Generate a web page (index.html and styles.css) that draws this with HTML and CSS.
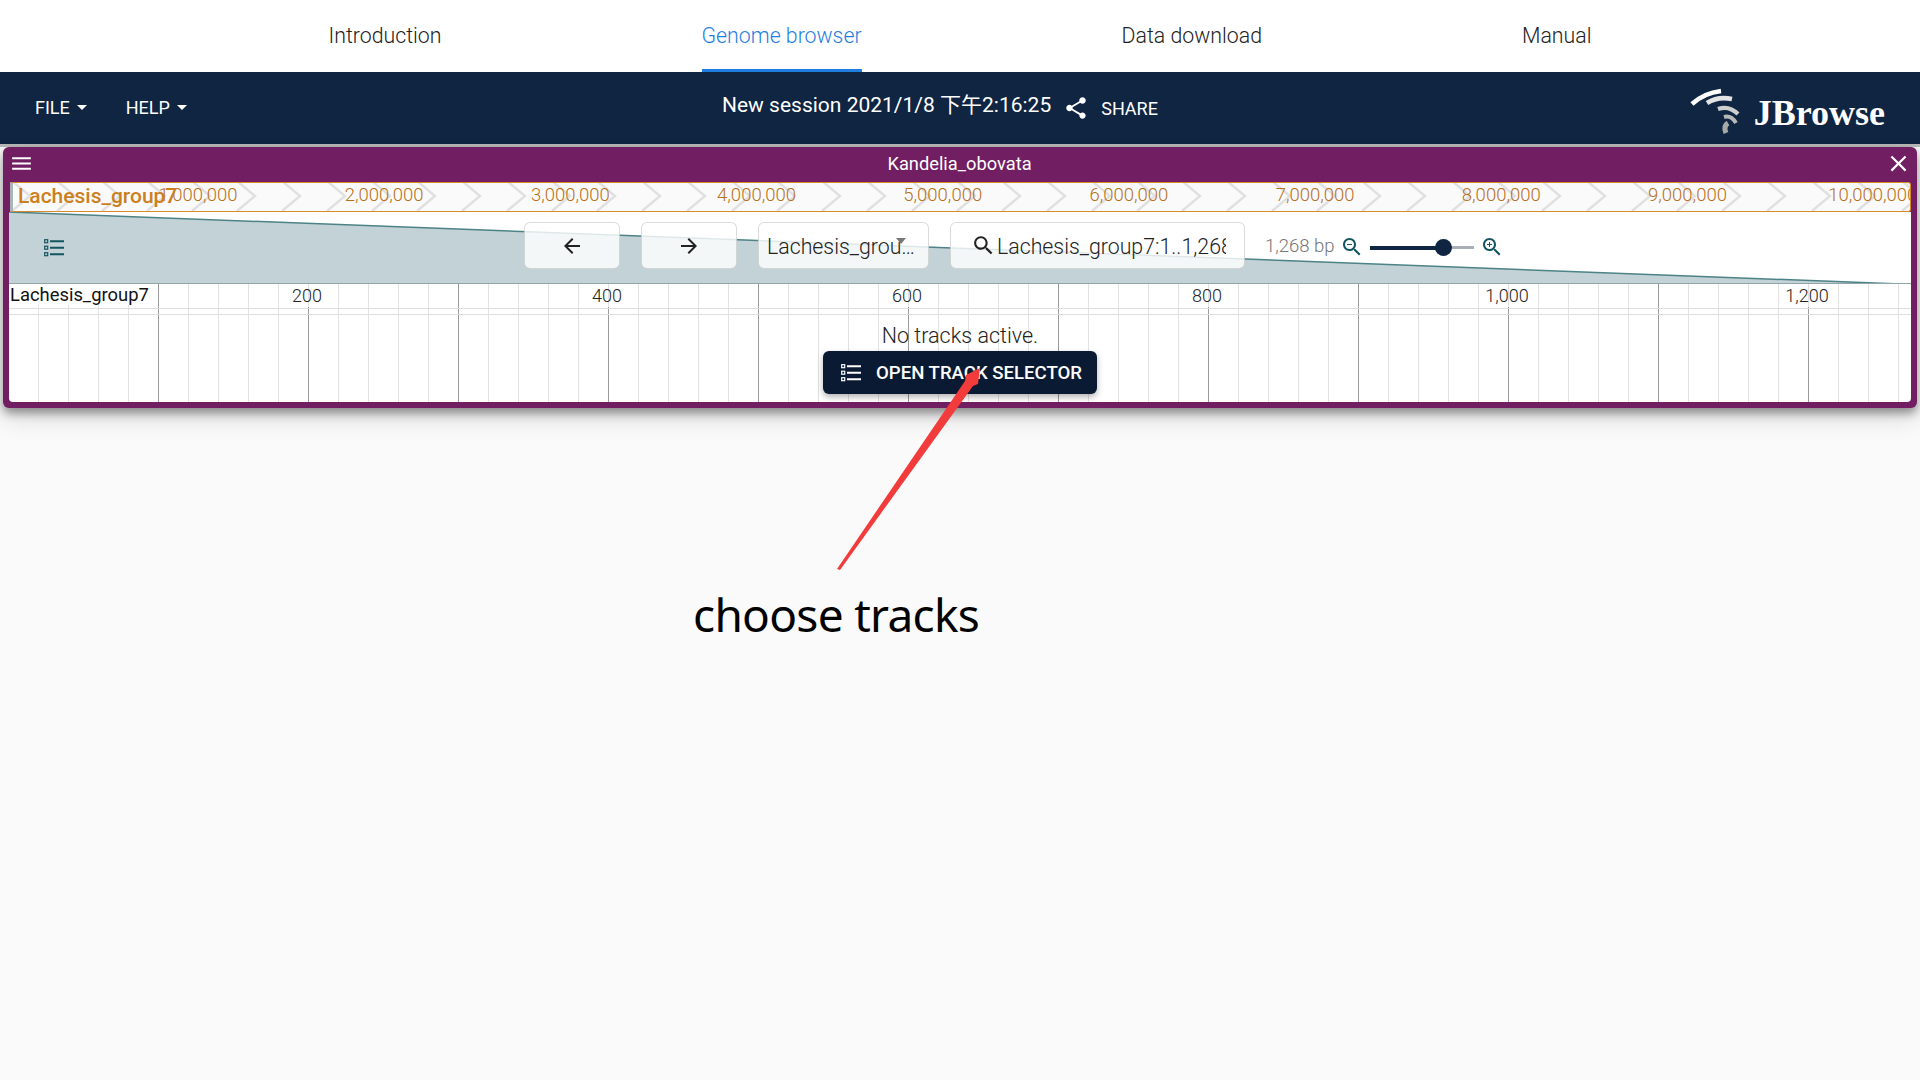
FILE: index.html
```html
<!DOCTYPE html>
<html lang="en">
<head>
    <meta charset="UTF-8">
    <title>Genome browser</title>
    <link rel="stylesheet" href="styles.css">
</head>
<body>
<nav class="topnav">
    <a class="topnav-item">Introduction</a>
    <a class="topnav-item active">Genome browser</a>
    <a class="topnav-item">Data download</a>
    <a class="topnav-item">Manual</a>
</nav>

<header class="appbar">
    <div class="menus">
        <span class="menu-btn">FILE<i class="caret"></i></span>
        <span class="menu-btn">HELP<i class="caret"></i></span>
    </div>
    <div class="session">
        <span class="session-name">New session 2021/1/8 下午2:16:25</span>
        <svg class="share-icon" viewBox="0 0 24 24"><path d="M18 16.08c-.76 0-1.44.3-1.96.77L8.91 12.7c.05-.23.09-.46.09-.7s-.04-.47-.09-.7l7.05-4.11c.54.5 1.25.81 2.04.81 1.66 0 3-1.34 3-3s-1.34-3-3-3-3 1.34-3 3c0 .24.04.47.09.7L8.04 9.81C7.5 9.31 6.79 9 6 9c-1.66 0-3 1.34-3 3s1.34 3 3 3c.79 0 1.5-.31 2.04-.81l7.12 4.16c-.05.21-.08.43-.08.65 0 1.61 1.31 2.92 2.92 2.92 1.61 0 2.92-1.31 2.92-2.92s-1.31-2.92-2.92-2.92z"/></svg>
        <span class="share-text">SHARE</span>
    </div>
    <div class="logo">
        <svg class="logo-mark" viewBox="0 0 68 52" fill="none">
            <path d="M6 20 Q18 9 35 7" stroke="#fff" stroke-width="4.6"/>
            <path d="M21 19 Q32 12 46 15" stroke="#e3e3e3" stroke-width="4.6"/>
            <path d="M32 25 Q43 21 52 30" stroke="#cfcfcf" stroke-width="4.2"/>
            <path d="M38 33 Q45 31 50 39" stroke="#b8b8b8" stroke-width="4"/>
            <path d="M40 49 Q37 42 42 39" stroke="#a8a8a8" stroke-width="5"/>
        </svg>
        <span class="logo-text">JBrowse</span>
    </div>
</header>

<section class="view">
    <div class="view-title">
        <svg class="menu-icon" viewBox="0 0 24 24"><path d="M3 18h18v-2H3v2zm0-5h18v-2H3v2zm0-7v2h18V6H3z"/></svg>
        <span class="title-text">Kandelia_obovata</span>
        <svg class="close-icon" viewBox="0 0 24 24"><path d="M19 6.41L17.59 5 12 10.59 6.41 5 5 6.41 10.59 12 5 17.59 6.41 19 12 13.41 17.59 19 19 17.59 13.41 12z"/></svg>
    </div>

    <div class="overview">
        <svg class="chevrons">
            <defs>
                <pattern id="chev" patternUnits="userSpaceOnUse" width="45" height="30">
                    <path d="M2 -1 L20 14 L2 29" fill="none" stroke="#e0e0e0" stroke-width="2.4"/>
                </pattern>
            </defs>
            <rect width="100%" height="100%" fill="url(#chev)"/>
        </svg>
        <div class="ov-ticks">
            <span>1,000,000</span>
            <span>2,000,000</span>
            <span>3,000,000</span>
            <span>4,000,000</span>
            <span>5,000,000</span>
            <span>6,000,000</span>
            <span>7,000,000</span>
            <span>8,000,000</span>
            <span>9,000,000</span>
            <span class="ov-tick-long">10,000,000</span>
        </div>
        <span class="ov-name">Lachesis_group7</span>
    </div>

    <div class="toolbar">
        <svg class="zoom-poly" viewBox="0 0 1902 72" preserveAspectRatio="none">
            <polygon points="0,0 1892,72 0,72" fill="#c3d2d6"/>
            <line x1="0" y1="0" x2="1892" y2="72" stroke="#4d8286" stroke-width="1.5"/>
            <line x1="0" y1="71.5" x2="1902" y2="71.5" stroke="#8fa5a8" stroke-width="1"/>
        </svg>
        <svg class="tracks-icon" viewBox="0 0 20 20">
            <rect x="0.7" y="1.7" width="3" height="3" fill="none" stroke="#135560" stroke-width="1.2"/>
            <rect x="0.7" y="8.2" width="3" height="3" fill="none" stroke="#135560" stroke-width="1.2"/>
            <rect x="0.7" y="14.7" width="3" height="3" fill="none" stroke="#135560" stroke-width="1.2"/>
            <path d="M6 3.2h14M6 9.7h14M6 16.2h14" stroke="#135560" stroke-width="2"/>
        </svg>
        <div class="controls">
            <span class="box arrow-btn"><svg viewBox="0 0 24 24"><path d="M20 11H7.83l5.59-5.59L12 4l-8 8 8 8 1.41-1.41L7.83 13H20v-2z"/></svg></span>
            <span class="box arrow-btn"><svg viewBox="0 0 24 24"><path d="M12 4l-1.41 1.41L16.17 11H4v2h12.17l-5.58 5.59L12 20l8-8z"/></svg></span>
            <span class="box select-box">Lachesis_grou…<i class="select-caret"></i></span>
            <span class="box search-box">
                <svg viewBox="0 0 24 24"><path d="M15.5 14h-.79l-.28-.27C15.41 12.59 16 11.11 16 9.5 16 5.91 13.09 3 9.5 3S3 5.91 3 9.5 5.91 16 9.5 16c1.61 0 3.09-.59 4.23-1.57l.27.28v.79l5 4.99L20.49 19l-4.99-5zm-6 0C7.01 14 5 11.99 5 9.5S7.01 5 9.5 5 14 7.01 14 9.5 11.99 14 9.5 14z"/></svg>
                <span class="search-text">Lachesis_group7:1..1,268</span>
            </span>
            <span class="bp-label">1,268 bp</span>
            <svg class="zoom-icon" viewBox="0 0 24 24"><path d="M15.5 14h-.79l-.28-.27C15.41 12.59 16 11.11 16 9.5 16 5.91 13.09 3 9.5 3S3 5.91 3 9.5 5.91 16 9.5 16c1.61 0 3.09-.59 4.23-1.57l.27.28v.79l5 4.99L20.49 19l-4.99-5zm-6 0C7.01 14 5 11.99 5 9.5S7.01 5 9.5 5 14 7.01 14 9.5 11.99 14 9.5 14zM7 9h5v1H7z"/></svg>
            <div class="slider"><i class="slider-fill"></i><i class="slider-thumb"></i></div>
            <svg class="zoom-icon" viewBox="0 0 24 24"><path d="M15.5 14h-.79l-.28-.27C15.41 12.59 16 11.11 16 9.5 16 5.91 13.09 3 9.5 3S3 5.91 3 9.5 5.91 16 9.5 16c1.61 0 3.09-.59 4.23-1.57l.27.28v.79l5 4.99L20.49 19l-4.99-5zm-6 0C7.01 14 5 11.99 5 9.5S7.01 5 9.5 5 14 7.01 14 9.5 11.99 14 9.5 14zM12 10h-2v2H9v-2H7V9h2V7h1v2h2v1z"/></svg>
        </div>
    </div>

    <div class="ruler">
        <span class="ruler-name">Lachesis_group7</span>
        <div class="ruler-ticks">
            <span>200</span>
            <span>400</span>
            <span>600</span>
            <span>800</span>
            <span>1,000</span>
            <span>1,200</span>
        </div>
        <p class="no-tracks">No tracks active.</p>
        <button class="open-tracks">
            <svg viewBox="0 0 20 20">
                <rect x="0.7" y="1.7" width="3" height="3" fill="none" stroke="#fff" stroke-width="1.2"/>
                <rect x="0.7" y="8.2" width="3" height="3" fill="none" stroke="#fff" stroke-width="1.2"/>
                <rect x="0.7" y="14.7" width="3" height="3" fill="none" stroke="#fff" stroke-width="1.2"/>
                <path d="M6 3.2h14M6 9.7h14M6 16.2h14" stroke="#fff" stroke-width="2"/>
            </svg>
            OPEN TRACK SELECTOR
        </button>
    </div>
</section>

<!-- annotation drawn on top of the screenshot -->
<svg class="note-arrow" viewBox="0 0 1920 1080">
    <polygon points="837,569 965,381 966,375 980,368 978,384 973,386 840,570" fill="#f23b3b"/>
</svg>
<div class="note-text">choose tracks</div>
</body>
</html>
```

FILE: styles.css
```css
* {
    padding: 0;
    margin: 0;
    box-sizing: border-box;
}

body {
    background: #fafafa;
    font-family: Roboto, "Noto Sans CJK SC", sans-serif;
    height: 1080px;
    overflow: hidden;
    position: relative;
}

.topnav {
    height: 72px;
    background: #fff;
    display: flex;
    justify-content: center;
    gap: 260px;
}

.topnav-item {
    height: 72px;
    line-height: 71px;
    font-size: 21.3px;
    font-weight: 300;
    color: #222;
}

.topnav-item.active {
    color: #1f7fe0;
    border-bottom: 3px solid #1f7fe0;
}

.appbar {
    height: 75px;
    background: #0f2542;
    border-bottom: 3px solid #b9b9b9;
    display: grid;
    grid-template-columns: 722px 1fr auto;
    align-items: center;
    color: #fff;
}

.menus {
    display: flex;
    padding-left: 35px;
    gap: 39px;
    margin-top: -1px;
}

.menu-btn {
    font-size: 18px;
    display: flex;
    align-items: center;
    gap: 7px;
}

.caret {
    border-left: 5px solid transparent;
    border-right: 5px solid transparent;
    border-top: 5px solid #fff;
}

.session {
    display: flex;
    align-items: center;
}

.session-name {
    font-size: 21px;
    margin-bottom: 10px;
}

.share-icon {
    width: 26px;
    height: 26px;
    fill: #fff;
    margin-left: 12px;
}

.share-text {
    font-size: 18px;
    margin-left: 12px;
}

.logo {
    display: flex;
    align-items: center;
    padding-right: 35px;
}

.logo-mark {
    width: 68px;
    height: 52px;
    margin-top: 4px;
}

.logo-text {
    font-family: "Liberation Serif", serif;
    font-weight: 700;
    font-size: 36px;
    margin-top: 9px;
}

.view {
    margin: 0 3px;
    height: 261px;
    background: #721e63;
    border-radius: 6px;
    padding: 0 6px 6px;
    box-shadow: 0 5px 10px rgba(0, 0, 0, .38), 0 10px 24px rgba(0, 0, 0, .14);
}

.view-title {
    height: 35px;
    display: flex;
    align-items: center;
    justify-content: space-between;
    color: #fff;
    padding-bottom: 2px;
}

.title-text {
    font-size: 18.3px;
    font-weight: 400;
}

.menu-icon {
    width: 25px;
    height: 25px;
    fill: #fff;
}

.close-icon {
    width: 27px;
    height: 27px;
    fill: #fff;
    margin-right: -1px;
}

.overview {
    height: 30px;
    margin-left: 1px;
    position: relative;
    overflow: hidden;
    background: #fafafa;
    border-top: 1px solid #d8892a;
    border-bottom: 1px solid #d8892a;
    border-right: 1px solid #d8892a;
    border-left: 3px solid #a9b4b4;
    border-radius: 0 3px 3px 0;
}

.chevrons {
    position: absolute;
    left: -3px;
    top: -1px;
    width: 1910px;
    height: 30px;
}

.ov-ticks {
    position: relative;
    display: flex;
    padding-left: 145.5px;
    height: 28px;
    line-height: 25px;
    font-size: 18.5px;
    font-weight: 300;
    color: #b8701a;
    white-space: nowrap;
}

.ov-ticks span {
    flex: 0 0 186.2px;
}

.ov-ticks .ov-tick-long {
    margin-left: -6px;
}

.ov-name {
    position: absolute;
    left: 5px;
    top: -1px;
    line-height: 28px;
    font-size: 21px;
    font-weight: 500;
    color: #cc7f1e;
    white-space: nowrap;
}

.toolbar {
    height: 72px;
    background: #fff;
    position: relative;
    display: flex;
    padding-top: 10px;
}

.zoom-poly {
    position: absolute;
    left: 0;
    top: 0;
    width: 100%;
    height: 72px;
}

.tracks-icon {
    position: relative;
    width: 20px;
    height: 20px;
    margin: 16px 0 0 35px;
}

.controls {
    position: relative;
    display: flex;
    align-items: flex-start;
    margin-left: 460px;
}

.box {
    height: 47px;
    background: rgba(255, 255, 255, .82);
    border: 1px solid rgba(0, 0, 0, .14);
    border-radius: 6px;
    display: flex;
    align-items: center;
    font-size: 21.3px;
    font-weight: 300;
    color: #222;
    margin-right: 21px;
    position: relative;
}

.arrow-btn {
    width: 96px;
    justify-content: center;
}

.arrow-btn svg {
    width: 24px;
    height: 24px;
    fill: #222;
}

.select-box {
    width: 171px;
    padding: 1px 0 0 8px;
    white-space: nowrap;
    overflow: hidden;
}

.select-caret {
    position: absolute;
    right: 22px;
    top: 15px;
    border-left: 5px solid transparent;
    border-right: 5px solid transparent;
    border-top: 6px solid #777;
}

.search-box {
    width: 295px;
    padding: 1px 0 0 20px;
}

.search-box svg {
    width: 25px;
    height: 25px;
    fill: #222;
    flex: none;
    margin-top: -1px;
}

.search-text {
    width: 229px;
    overflow: hidden;
    white-space: nowrap;
    margin-left: 1px;
}

.bp-label {
    font-size: 18.5px;
    font-weight: 300;
    color: #777;
    line-height: 48px;
    margin-left: -1px;
    width: 74.5px;
    white-space: nowrap;
}

.zoom-icon {
    width: 24px;
    height: 24px;
    fill: #135560;
    margin-top: 13px;
}

.slider {
    width: 104px;
    height: 47px;
    position: relative;
    margin: 2px 6px 0 6px;
}

.slider::before {
    content: "";
    position: absolute;
    left: 0;
    right: 0;
    top: 22px;
    height: 3px;
    background: #a9afb6;
}

.slider-fill {
    position: absolute;
    left: 0;
    width: 74px;
    top: 21.5px;
    height: 4px;
    background: #0f2542;
}

.slider-thumb {
    position: absolute;
    left: 65px;
    top: 15px;
    width: 17px;
    height: 17px;
    border-radius: 50%;
    background: #0f2542;
}

.ruler {
    height: 118px;
    background-color: #fff;
    background-image:
        linear-gradient(#dedede, #dedede),
        linear-gradient(#dedede, #dedede),
        linear-gradient(to right, #9a9a9a 1px, transparent 1px),
        linear-gradient(to right, #9a9a9a 1px, transparent 1px),
        linear-gradient(to right, #e2e2e2 1px, transparent 1px);
    background-size: 100% 1px, 100% 1px, 300px 100%, 300px 100%, 30px 100%;
    background-position: 0 24px, 0 30px, 149px 0, 299px 23px, 29px 0;
    background-repeat: no-repeat, no-repeat, repeat-x, repeat-x, repeat-x;
    border-radius: 0 0 4px 4px;
    position: relative;
    display: flex;
    flex-direction: column;
    align-items: center;
}

.ruler-name {
    position: absolute;
    left: 0;
    top: 0;
    width: 149px;
    height: 21px;
    background: #fff;
    padding-left: 1px;
    font-size: 18.4px;
    line-height: 22px;
    color: #111;
    white-space: nowrap;
}

.ruler-ticks {
    display: flex;
    align-self: flex-start;
    padding-left: 148px;
    height: 23px;
    line-height: 24px;
    font-size: 18px;
    font-weight: 300;
    color: #222;
}

.ruler-ticks span {
    flex: 0 0 300px;
    text-align: center;
}

.no-tracks {
    font-size: 21.5px;
    font-weight: 300;
    color: #222;
    margin-top: 17px;
    line-height: 24px;
}

.open-tracks {
    width: 274px;
    height: 43px;
    margin-top: 3px;
    border: 0;
    border-radius: 6px;
    background: #0b1a33;
    color: #fff;
    font-family: inherit;
    font-size: 18.6px;
    font-weight: 500;
    display: flex;
    align-items: center;
    padding-left: 18px;
    gap: 15px;
    white-space: nowrap;
    box-shadow: 0 3px 6px rgba(0, 0, 0, .3);
}

.open-tracks svg {
    width: 20px;
    height: 20px;
}

.note-arrow {
    position: absolute;
    left: 0;
    top: 0;
    width: 1920px;
    height: 1080px;
    pointer-events: none;
}

.note-text {
    position: absolute;
    left: 693px;
    top: 581px;
    font-family: "Noto Sans", sans-serif;
    font-size: 46px;
    letter-spacing: -.7px;
    line-height: 66px;
    color: #000;
    white-space: nowrap;
}
```
